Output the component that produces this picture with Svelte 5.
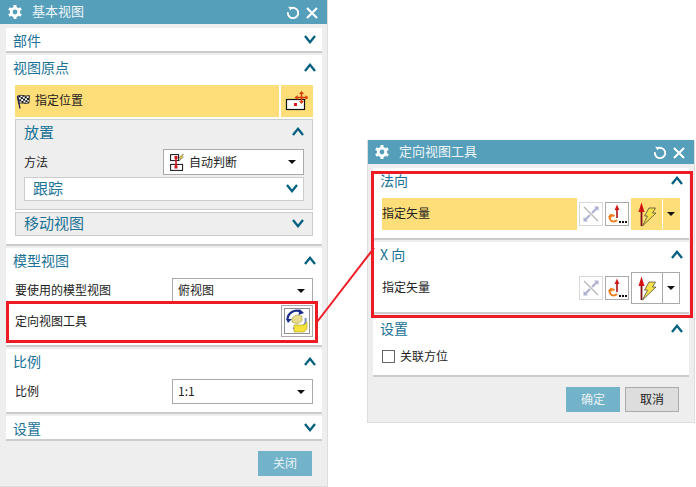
<script>
  const leftTitle = '基本视图';
  const rightTitle = '定向视图工具';
</script>

{#snippet chevron(up)}
  <svg class="chev" width="12" height="9" viewBox="0 0 12 9">
    {#if up}
      <path d="M1 8 L6 1.8 L11 8" fill="none" stroke="#04607f" stroke-width="2.3"/>
    {:else}
      <path d="M1 1 L6 7.2 L11 1" fill="none" stroke="#04607f" stroke-width="2.3"/>
    {/if}
  </svg>
{/snippet}

{#snippet titlebar(text)}
  <div class="titlebar">
    <svg class="gear" width="14" height="14" viewBox="0 0 14 14">
      <g fill="#fff">
        <circle cx="7" cy="7" r="5.2"/>
        <rect x="5.5" y="0" width="3" height="14"/>
        <rect x="5.5" y="0" width="3" height="14" transform="rotate(60 7 7)"/>
        <rect x="5.5" y="0" width="3" height="14" transform="rotate(120 7 7)"/>
      </g>
      <circle cx="7" cy="7" r="2.4" fill="#569fba"/>
    </svg>
    <span class="wintitle">{text}</span>
    <svg class="refresh" width="14" height="14" viewBox="0 0 14 14">
      <path d="M4.2 2.6 A5.2 5.2 0 1 1 1.9 6.2" fill="none" stroke="#fff" stroke-width="1.9"/>
      <path d="M2.2 0.8 L6 1 L4.6 4.6 Z" fill="#fff"/>
    </svg>
    <svg class="close" width="12" height="12" viewBox="0 0 12 12">
      <path d="M1 1 L11 11 M11 1 L1 11" stroke="#fff" stroke-width="2.1"/>
    </svg>
  </div>
{/snippet}

{#snippet caret()}
  <svg class="caret" width="8" height="4" viewBox="0 0 8 4"><path d="M0 0H8L4 4Z" fill="#111"/></svg>
{/snippet}

{#snippet reverseIcon()}
  <span class="vbtn off">
    <svg width="20" height="20" viewBox="0 0 20 20">
      <path d="M3 3 L17 17" stroke="#b5b5b5" stroke-width="1.2"/>
      <path d="M11 9 L16 4" stroke="#aeb0cf" stroke-width="2.2"/>
      <path d="M13 2.5 H17.5 V7 Z" fill="#aeb0cf"/>
      <path d="M9 11 L4 16" stroke="#aeb0cf" stroke-width="2.2"/>
      <path d="M2.5 13 V17.5 H7 Z" fill="#aeb0cf"/>
    </svg>
  </span>
{/snippet}

{#snippet dialogIcon()}
  <span class="vbtn on">
    <svg width="22" height="22" viewBox="0 0 22 22">
      <path d="M11 6 V15" stroke="#b01010" stroke-width="1.6"/>
      <path d="M8.6 7 L11 1.5 L13.4 7 Z" fill="#d01818"/>
      <path d="M8.5 13 C4 11 2.5 14 4.5 17 C6 19 9 19 11 17" fill="none" stroke="#ef7d1a" stroke-width="2"/>
      <path d="M2 14 L5 10.6 L6.4 14.6 Z" fill="#ef7d1a"/>
      <rect x="13" y="18" width="2" height="2" fill="#111"/>
      <rect x="16" y="18" width="2" height="2" fill="#111"/>
      <rect x="19" y="18" width="2" height="2" fill="#111"/>
    </svg>
  </span>
{/snippet}

{#snippet vectorIcon()}
  <svg class="vec" width="19" height="25" viewBox="0 0 19 25">
    <path d="M3.5 8 V24" stroke="#7a1010" stroke-width="1.8"/>
    <path d="M0.5 10 L3.5 0.5 L6.5 10 Z" fill="#d01414"/>
    <path d="M11 6 H17.5 L14.5 11 H18 L4.5 24 L9.5 14 H6.5 Z" fill="#f4e04a" stroke="#55513a" stroke-width="0.8"/>
  </svg>
{/snippet}

<div class="desk">
  <div class="dialog left">
    {@render titlebar(leftTitle)}
    <div class="stack">
      <section class="sec folded">
        <div class="head"><h3>部件</h3>{@render chevron(false)}</div>
      </section>

      <section class="sec">
        <div class="head"><h3>视图原点</h3>{@render chevron(true)}</div>
        <div class="body">
          <div class="pickrow">
            <div class="pick">
              <svg width="15" height="15" viewBox="0 0 15 15">
                <defs>
                  <pattern id="chk" width="4" height="4" patternUnits="userSpaceOnUse" patternTransform="rotate(-10)">
                    <rect width="4" height="4" fill="#fff"/>
                    <rect width="2" height="2" fill="#111"/>
                    <rect x="2" y="2" width="2" height="2" fill="#111"/>
                  </pattern>
                </defs>
                <path d="M1.5 2 C5 0 9 3 13.5 1.5 L13 9 C9 10.5 6 8 2.6 9.5 Z" fill="url(#chk)" stroke="#111" stroke-width="0.7"/>
                <path d="M1.5 2 L4 14.5" stroke="#22224f" stroke-width="1.3"/>
              </svg>
              <span>指定位置</span>
            </div>
            <div class="pickbtn">
              <svg width="24" height="20" viewBox="0 0 24 20">
                <rect x="1.5" y="8.5" width="18" height="10" fill="#fff" stroke="#111" stroke-width="1.2"/>
                <rect x="9" y="12" width="3" height="3" fill="#e0141c"/>
                <path d="M16.5 1 V12 M10 6.5 H23" stroke="#d8400e" stroke-width="1.6"/>
                <path d="M14 3 L16.5 0 L19 3 Z M14 10 L16.5 13 L19 10 Z M12.6 4 L10 6.5 L12.6 9 Z M20.4 4 L23 6.5 L20.4 9 Z" fill="#d8400e"/>
              </svg>
            </div>
          </div>

          <div class="sub">
            <div class="subhead"><h4>放置</h4>{@render chevron(true)}</div>
            <div class="formrow method">
              <span class="lbl">方法</span>
              <div class="select wide">
                <svg width="14" height="17" viewBox="0 0 14 17">
                  <rect x=".6" y=".6" width="8" height="6" fill="#fff" stroke="#111"/>
                  <rect x=".6" y="10.4" width="12" height="6" fill="#fff" stroke="#111"/>
                  <path d="M6 3 V13" stroke="#d0141c" stroke-width="1.6"/>
                  <rect x="4.5" y="2" width="3" height="3" fill="#d0141c"/>
                  <rect x="4.5" y="11.5" width="3" height="3" fill="#d0141c"/>
                  <path d="M12 .5 L9 4 H11 L9 7 L13.5 3 H11.5 L13.5 .5 Z" fill="#f0dc3c" stroke="#665" stroke-width=".5"/>
                </svg>
                <span class="val">自动判断</span>
                {@render caret()}
              </div>
            </div>
            <div class="track"><h4>跟踪</h4>{@render chevron(false)}</div>
          </div>

          <div class="sub move">
            <div class="subhead"><h4>移动视图</h4>{@render chevron(false)}</div>
          </div>
        </div>
      </section>

      <section class="sec">
        <div class="head"><h3>模型视图</h3>{@render chevron(true)}</div>
        <div class="body">
          <div class="formrow">
            <span class="lbl">要使用的模型视图</span>
            <div class="select"><span class="val">俯视图</span>{@render caret()}</div>
          </div>
          <div class="formrow tool">
            <span class="lbl">定向视图工具</span>
            <div class="toolbtn">
              <svg width="26" height="26" viewBox="0 0 26 26">
                <rect x=".5" y=".5" width="25" height="25" fill="none" stroke="#222" stroke-dasharray="1 1"/>
                <path d="M3.5 12 A9 9 0 0 1 17 4" fill="none" stroke="#1d2f8c" stroke-width="2.2"/>
                <path d="M15.5 1 L20 5 L14.5 7 Z" fill="#1d2f8c"/>
                <path d="M21.5 10 A9 9 0 0 1 9 20" fill="none" stroke="#7d8fc9" stroke-width="2"/>
                <path d="M2 11 L8 11 L4 15 Z" fill="#1d2f8c"/>
                <path d="M8 10 L12 7 L18 8 L18 13 L13 16 L8 14 Z" fill="#e8dc8c" stroke="#a89a40" stroke-width=".6"/>
                <path d="M10 17 H20 L23 14 V21 L20 24 H10 Z" fill="#f6e23c" stroke="#a89a20" stroke-width=".6"/>
              </svg>
            </div>
          </div>
        </div>
      </section>

      <section class="sec">
        <div class="head"><h3>比例</h3>{@render chevron(true)}</div>
        <div class="body">
          <div class="formrow">
            <span class="lbl">比例</span>
            <div class="select"><span class="val">1:1</span>{@render caret()}</div>
          </div>
        </div>
      </section>

      <section class="sec folded">
        <div class="head"><h3>设置</h3>{@render chevron(false)}</div>
      </section>
    </div>
    <div class="footer"><button class="primary">关闭</button></div>
  </div>

  <div class="dialog right">
    {@render titlebar(rightTitle)}
    <div class="stack">
      <section class="sec">
        <div class="head"><h3>法向</h3>{@render chevron(true)}</div>
        <div class="body">
          <div class="vecrow">
            <div class="veclabel active">指定矢量</div>
            {@render reverseIcon()}
            {@render dialogIcon()}
            <div class="split active">
              <span class="splitmain">{@render vectorIcon()}</span>
              <span class="splitarrow">{@render caret()}</span>
            </div>
          </div>
        </div>
      </section>

      <section class="sec">
        <div class="head"><h3>X 向</h3>{@render chevron(true)}</div>
        <div class="body">
          <div class="vecrow">
            <div class="veclabel">指定矢量</div>
            {@render reverseIcon()}
            {@render dialogIcon()}
            <div class="split">
              <span class="splitmain">{@render vectorIcon()}</span>
              <span class="splitarrow">{@render caret()}</span>
            </div>
          </div>
        </div>
      </section>

      <section class="sec">
        <div class="head"><h3>设置</h3>{@render chevron(true)}</div>
        <div class="body">
          <label class="check"><span class="box"></span><span class="lbl">关联方位</span></label>
        </div>
      </section>
    </div>
    <div class="footer">
      <button class="primary">确定</button>
      <button class="secondary">取消</button>
    </div>
  </div>

  <svg class="annot" width="696" height="487" viewBox="0 0 696 487">
    <g fill="none" stroke="#ed1c24" stroke-width="3">
      <rect x="7.5" y="302.5" width="309" height="39"/>
      <rect x="372.5" y="172.5" width="319" height="144"/>
    </g>
    <path d="M317 322 L374 248" stroke="#ed1c24" stroke-width="2"/>
  </svg>
</div>

<style>
  :global(body) {
    margin: 0;
    background: #fff;
  }
  .desk {
    position: relative;
    width: 696px;
    height: 487px;
    display: flex;
    align-items: flex-start;
    gap: 39px;
    overflow: hidden;
    font-family: "Noto Sans CJK SC", "Noto Sans", sans-serif;
    font-size: 12px;
    color: #222;
  }
  .dialog {
    box-sizing: border-box;
    width: 328px;
    flex: none;
    background: #eee;
    border-right: 1px solid #ddd;
    border-bottom: 1px solid #ddd;
  }
  .left { height: 487px; }
  .right {
    margin-top: 140px;
    height: 283px;
    border-left: 1px solid #ddd;
  }
  .titlebar {
    height: 24px;
    background: #569fba;
    display: flex;
    align-items: center;
    color: #fff;
  }
  .gear { margin-left: 8px; }
  .right .gear { margin-left: 7px; }
  .wintitle {
    margin-left: 10px;
    font-size: 13px;
    line-height: 22px;
    padding-bottom: 2px;
    flex: 1;
    color: #eef6f9;
  }
  .refresh { margin-right: 6px; margin-top: 1px; }
  .close { margin-right: 9px; margin-top: 1px; }
  .stack {
    padding: 4px 5px 0 6px;
    display: flex;
    flex-direction: column;
    gap: 2px;
  }
  .right .stack { padding: 4px 5px 0 5px; }
  .sec {
    background: #fff;
    border-bottom: 2px solid #ccc;
  }
  .head {
    height: 26px;
    padding: 0 6px 0 7px;
    display: flex;
    justify-content: space-between;
    align-items: flex-start;
  }
  .folded .head { height: 23px; }
  h3, h4 {
    margin: 0;
    font-weight: 400;
    color: #1a7296;
  }
  h3 {
    font-size: 14px;
    line-height: 24px;
  }
  h4 {
    font-size: 15px;
    line-height: 22px;
  }
  .chev { margin-top: 8px; }
  .folded .chev { margin-top: 7px; }
  .lbl { margin-top: -2px; }
  .val { margin-top: -2px; }
  .body { padding: 4px 9px 8px; }
  .pickrow {
    display: flex;
    gap: 2px;
    height: 32px;
  }
  .pick {
    flex: 1;
    background: #fede78;
    display: flex;
    align-items: center;
    gap: 4px;
    padding-left: 1px;
    line-height: 30px;
  }
  .pick span { margin-top: -2px; }
  .pickbtn {
    width: 32px;
    background: #fede78;
    display: flex;
    align-items: center;
    justify-content: center;
  }
  .sub {
    margin-top: 2px;
    box-sizing: border-box;
    height: 91px;
    background: #eee;
    border: 1px solid #ccc;
    padding: 0 8px;
  }
  .sub.move { height: 24px; }
  .subhead {
    height: 26px;
    display: flex;
    justify-content: space-between;
    align-items: flex-start;
  }
  .subhead h4 { line-height: 23px; }
  .subhead .chev { margin-top: 7px; }
  .sub.move .subhead { height: 22px; }
  .sub.move .subhead h4 { line-height: 20px; }
  .sub.move .chev { margin-top: 6px; }
  .formrow {
    display: flex;
    justify-content: space-between;
    align-items: center;
    height: 25px;
    line-height: 25px;
  }
  .method { margin-top: 3px; height: 26px; }
  .select {
    box-sizing: border-box;
    width: 141px;
    height: 100%;
    background: #fff;
    border: 1px solid #aaa;
    display: flex;
    align-items: center;
    padding: 0 7px 0 5px;
    gap: 5px;
  }
  .select .val { flex: 1; }
  .select.wide { padding-left: 6px; }
  .track {
    box-sizing: border-box;
    margin-top: 2px;
    height: 24px;
    background: #fff;
    border: 1px solid #ccc;
    display: flex;
    justify-content: space-between;
    align-items: flex-start;
    padding: 0 5px 0 8px;
  }
  .track h4 { line-height: 20px; }
  .track .chev { margin-top: 6px; }
  .tool {
    height: 32px;
    margin-top: 2px;
  }
  .toolbtn {
    box-sizing: border-box;
    width: 32px;
    height: 32px;
    background: #fff;
    border: 1px solid #aaa;
    display: flex;
    align-items: center;
    justify-content: center;
  }
  .vecrow {
    display: flex;
    align-items: center;
    gap: 2px;
    height: 32px;
  }
  .veclabel {
    width: 195px;
    height: 32px;
    line-height: 30px;
  }
  .active { background: #fede78; }
  .vbtn {
    box-sizing: border-box;
    width: 24px;
    height: 24px;
    background: #fff;
    border: 1px solid #aaa;
    display: flex;
    align-items: center;
    justify-content: center;
  }
  .vbtn.off { border-color: #d8d8d8; }
  .split {
    box-sizing: border-box;
    width: 49px;
    height: 32px;
    display: flex;
    border: 1px solid #aaa;
    background: #fff;
  }
  .split.active {
    border-color: #fede78;
    background: #fede78;
  }
  .splitmain {
    width: 30px;
    display: flex;
    align-items: center;
    justify-content: center;
    border-right: 1px solid #aaa;
  }
  .split.active .splitmain { border-right-color: #fff; }
  .splitarrow {
    flex: 1;
    display: flex;
    align-items: center;
    justify-content: center;
  }
  .check {
    display: flex;
    align-items: center;
    gap: 5px;
    height: 20px;
    margin-bottom: 1px;
  }
  .box {
    box-sizing: border-box;
    width: 13px;
    height: 13px;
    background: #fff;
    border: 1px solid #666;
  }
  .footer {
    display: flex;
    justify-content: flex-end;
    gap: 5px;
    padding: 10px 15px 0 0;
  }
  button {
    box-sizing: border-box;
    width: 54px;
    height: 25px;
    margin: 0;
    padding: 0 0 2px;
    font: inherit;
    line-height: 21px;
  }
  .primary {
    background: #73b3c9;
    border: none;
    color: #e6f2f6;
  }
  .secondary {
    background: #ddd;
    border: 1px solid #aaa;
    color: #222;
  }
  .annot {
    position: absolute;
    left: 0;
    top: 0;
    pointer-events: none;
  }
</style>
